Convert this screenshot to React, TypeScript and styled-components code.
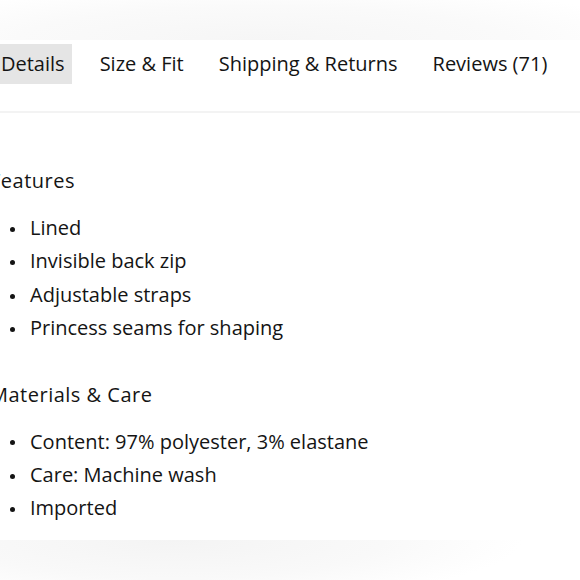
import React from "react";
import styled, { createGlobalStyle } from "styled-components";

const Global = createGlobalStyle`
  html, body { margin: 0; padding: 0; background: #ffffff; }
  body { font-family: "Open Sans", "Noto Sans", sans-serif; color: #141414; overflow: hidden; }
`;

const Page = styled.div`
  width: 580px;
  height: 580px;
  overflow: hidden;
  display: flex;
  flex-direction: column;
`;

const Band = styled.div<{ $top?: boolean }>`
  height: 40px;
  flex-shrink: 0;
  background: ${(p) =>
    p.$top
      ? "radial-gradient(ellipse 70% 140% at 45% 100%, #f6f6f6 0%, #fafafa 60%, #ffffff 100%)"
      : "radial-gradient(ellipse 60% 160% at 30% 0%, #f4f4f4 0%, #f9f9f9 60%, #ffffff 100%)"};
`;

const TabBar = styled.div`
  display: flex;
  gap: 21px;
  margin-top: 4px;
  margin-left: -6px;
  padding-bottom: 27px;
  border-bottom: 2px solid #f3f3f3;
`;

const Tab = styled.div<{ $active?: boolean }>`
  height: 40px;
  padding: 0 7px 2px;
  box-sizing: border-box;
  display: flex;
  align-items: center;
  font-size: 20px;
  white-space: nowrap;
  background: ${(p) => (p.$active ? "#e5e5e5" : "transparent")};
`;

const Content = styled.div`
  padding-top: 56px;
  margin-left: -10px;
  flex: 1;
`;

const Section = styled.section`
  & + & { margin-top: 38px; }
`;

const Heading = styled.h3`
  margin: 0;
  font-size: 20px;
  letter-spacing: 0.5px;
  font-weight: 400;
  line-height: 24px;
`;

const List = styled.ul`
  list-style: none;
  margin: 18px 0 0;
  padding: 0;
`;

const Item = styled.li`
  position: relative;
  padding-left: 40px;
  font-size: 20px;
  line-height: 33.4px;
  white-space: nowrap;
  &::before {
    content: "";
    position: absolute;
    left: 20px;
    top: 50%;
    width: 5px;
    height: 5px;
    margin-top: -1px;
    border-radius: 50%;
    background: #141414;
  }
`;

const sections = [
  {
    title: "Features",
    items: ["Lined", "Invisible back zip", "Adjustable straps", "Princess seams for shaping"],
  },
  {
    title: "Materials & Care",
    items: ["Content: 97% polyester, 3% elastane", "Care: Machine wash", "Imported"],
  },
];

export default function App() {
  return (
    <Page>
      <Global />
      <Band $top />
      <TabBar>
        <Tab $active>Details</Tab>
        <Tab>Size &amp; Fit</Tab>
        <Tab>Shipping &amp; Returns</Tab>
        <Tab>Reviews (71)</Tab>
      </TabBar>
      <Content>
        {sections.map((s) => (
          <Section key={s.title}>
            <Heading>{s.title}</Heading>
            <List>
              {s.items.map((i) => (
                <Item key={i}>{i}</Item>
              ))}
            </List>
          </Section>
        ))}
      </Content>
      <Band />
    </Page>
  );
}
